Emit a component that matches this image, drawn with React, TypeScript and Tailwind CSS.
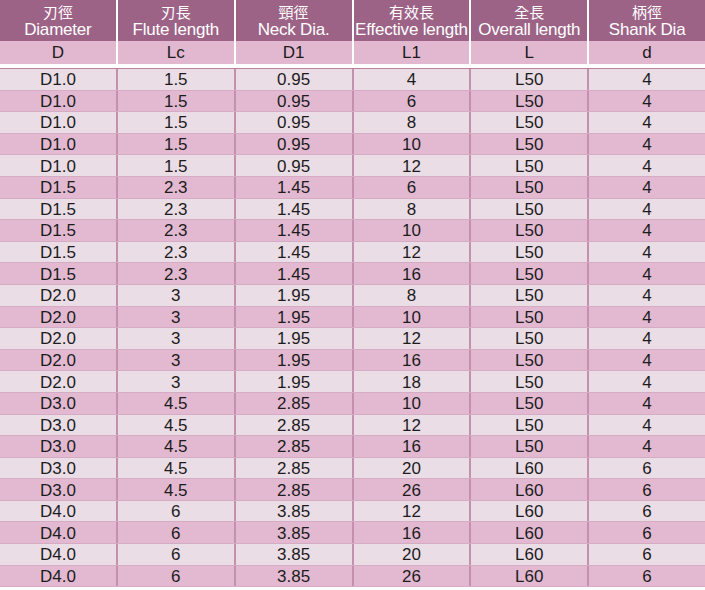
import React from 'react';

interface IColumn {
  zh: string;
  en: string;
  sym: string;
}

type TRow = [string, string, string, string, string, string];

const columns: IColumn[] = [
  { zh: '刃徑', en: 'Diameter', sym: 'D' },
  { zh: '刃長', en: 'Flute length', sym: 'Lc' },
  { zh: '頸徑', en: 'Neck Dia.', sym: 'D1' },
  { zh: '有效長', en: 'Effective length', sym: 'L1' },
  { zh: '全長', en: 'Overall length', sym: 'L' },
  { zh: '柄徑', en: 'Shank Dia', sym: 'd' },
];

const rows: TRow[] = [
  ['D1.0', '1.5', '0.95', '4', 'L50', '4'],
  ['D1.0', '1.5', '0.95', '6', 'L50', '4'],
  ['D1.0', '1.5', '0.95', '8', 'L50', '4'],
  ['D1.0', '1.5', '0.95', '10', 'L50', '4'],
  ['D1.0', '1.5', '0.95', '12', 'L50', '4'],
  ['D1.5', '2.3', '1.45', '6', 'L50', '4'],
  ['D1.5', '2.3', '1.45', '8', 'L50', '4'],
  ['D1.5', '2.3', '1.45', '10', 'L50', '4'],
  ['D1.5', '2.3', '1.45', '12', 'L50', '4'],
  ['D1.5', '2.3', '1.45', '16', 'L50', '4'],
  ['D2.0', '3', '1.95', '8', 'L50', '4'],
  ['D2.0', '3', '1.95', '10', 'L50', '4'],
  ['D2.0', '3', '1.95', '12', 'L50', '4'],
  ['D2.0', '3', '1.95', '16', 'L50', '4'],
  ['D2.0', '3', '1.95', '18', 'L50', '4'],
  ['D3.0', '4.5', '2.85', '10', 'L50', '4'],
  ['D3.0', '4.5', '2.85', '12', 'L50', '4'],
  ['D3.0', '4.5', '2.85', '16', 'L50', '4'],
  ['D3.0', '4.5', '2.85', '20', 'L60', '6'],
  ['D3.0', '4.5', '2.85', '26', 'L60', '6'],
  ['D4.0', '6', '3.85', '12', 'L60', '6'],
  ['D4.0', '6', '3.85', '16', 'L60', '6'],
  ['D4.0', '6', '3.85', '20', 'L60', '6'],
  ['D4.0', '6', '3.85', '26', 'L60', '6'],
];

const App: React.FC = () => {
  return (
    <div
      className="w-[705px] h-[590px] overflow-hidden bg-white text-[#1c1c1c]"
      style={{ fontFamily: '"Liberation Sans", Arial, "Noto Sans CJK TC", sans-serif' }}>
      {/* title row */}
      <div className="grid grid-cols-6 gap-x-[2px]">
        {columns.map((c) => (
          <div key={c.en} className="bg-[#9d6387]">
            <div className="flex h-[41px] flex-col items-center justify-center pt-[1px] text-white">
              <span className="text-[15px] leading-[17px]">{c.zh}</span>
              <span className="text-[17px] leading-[18px] tracking-[-0.2px] whitespace-nowrap">{c.en}</span>
            </div>
            <div className="flex h-[23px] items-center justify-center bg-[#e2b8d0] pt-[1px] text-[17px]">{c.sym}</div>
          </div>
        ))}
      </div>

      {/* body */}
      <div className="mt-[4px] border-t border-[#b9829f]">
        {rows.map((r, i) => (
          <div key={i} className="grid h-[21.6px] grid-cols-6 gap-x-[2px] bg-[#c68fb0] border-b border-[#d6abc4]">
            {r.map((v, j) => (
              <div
                key={j}
                className={`flex items-center justify-center pt-[1px] text-[17px] leading-none ${
                  i % 2 === 0 ? 'bg-[#ebdde6]' : 'bg-[#e2b9d1]'
                }`}>
                {v}
              </div>
            ))}
          </div>
        ))}
      </div>
    </div>
  );
};

export default App;
